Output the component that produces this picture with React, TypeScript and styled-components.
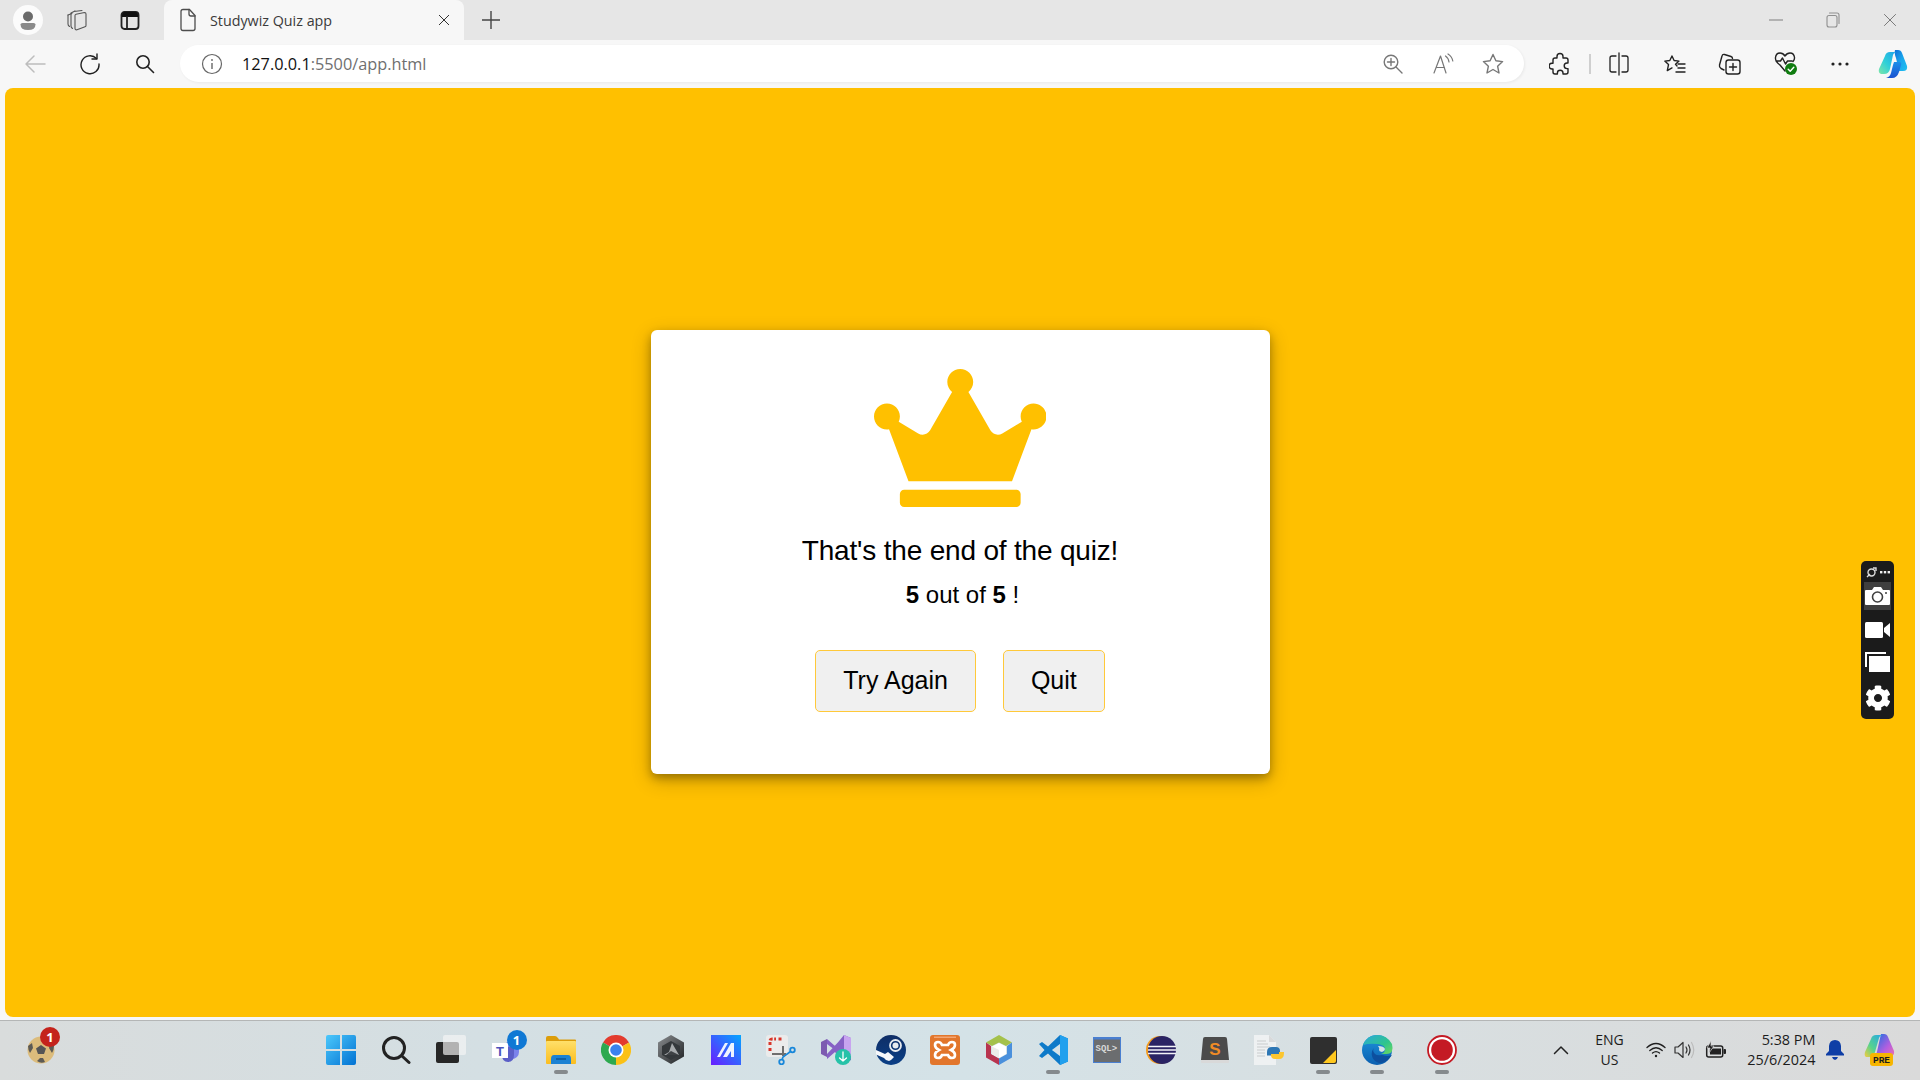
import React from "react";
import styled, { createGlobalStyle } from "styled-components";
import { FaCrown, FaCog } from "react-icons/fa";

const Global = createGlobalStyle`
  html, body { margin: 0; padding: 0; height: 100%; overflow: hidden; background: #f7f7f7; }
  #root { height: 100%; }
  * { box-sizing: border-box; }
`;

const Shell = styled.div`
  height: 1080px;
  width: 1920px;
  display: flex;
  flex-direction: column;
  font-family: "Open Sans", "Liberation Sans", sans-serif;
`;

const TabStrip = styled.div`
  height: 40px;
  flex: none;
  background: #e6e6e6;
  display: flex;
  align-items: center;
  padding: 0 2px 0 13px;
`;

const Slot = styled.div<{ $w?: number; $ml?: number }>`
  width: ${(p) => p.$w ?? 30}px;
  height: 30px;
  margin-left: ${(p) => p.$ml ?? 0}px;
  flex: none;
  display: flex;
  align-items: center;
  justify-content: center;
`;

const Tab = styled.div`
  width: 300px;
  height: 40px;
  margin-left: 19px;
  flex: none;
  background: #f7f7f7;
  border-radius: 8px 8px 0 0;
  display: flex;
  align-items: center;
  padding: 0 14px 0 15px;
`;

const TabTitle = styled.span`
  flex: 1;
  margin-left: 13px;
  font-size: 14.3px;
  color: #3b3b3b;
  white-space: nowrap;
`;

const Spacer = styled.div`
  flex: 1;
`;

const Toolbar = styled.div`
  height: 48px;
  flex: none;
  background: #f7f7f7;
  display: flex;
  align-items: center;
  padding: 0 12px 1px 20px;
`;

const AddressPill = styled.div`
  flex: 1;
  height: 37px;
  margin-left: 20px;
  background: #fff;
  border-radius: 19px;
  box-shadow: 1px 1px 3px rgba(0, 0, 0, 0.06);
  display: flex;
  align-items: center;
  padding: 0 19px 0 20px;
`;

const Url = styled.div`
  flex: 1;
  margin-left: 18px;
  font-size: 16.3px;
  color: #6f6f6f;
  white-space: nowrap;
`;

const UrlHost = styled.span`
  color: #111;
`;

const Divider = styled.div`
  width: 2px;
  height: 20px;
  margin-left: 14px;
  flex: none;
  background: #cfcfcf;
`;

const Viewport = styled.main`
  flex: 1;
  margin: 0 5px 3px;
  padding-bottom: 1px;
  background: #ffc000;
  border-radius: 8px;
  position: relative;
  display: flex;
  align-items: center;
  justify-content: center;
`;

const Card = styled.section`
  width: 619px;
  height: 444px;
  background: #fff;
  border-radius: 6px;
  box-shadow: 0 4px 8px rgba(0, 0, 0, 0.26), 0 6px 20px rgba(0, 0, 0, 0.24);
  display: flex;
  flex-direction: column;
  align-items: center;
  padding-top: 39px;
  font-family: "Liberation Sans", Arial, sans-serif;
  color: #000;
`;

const Crown = styled(FaCrown)`
  font-size: 138px;
  width: 172.5px;
  height: 138px;
  color: #ffc000;
  display: block;
`;

const Title = styled.div`
  margin-top: 29px;
  font-size: 28px;
  line-height: 30px;
  letter-spacing: -0.18px;
`;

const Score = styled.div`
  margin-top: 14px;
  padding-left: 5px;
  font-size: 24px;
  line-height: 30px;
`;

const Buttons = styled.div`
  margin-top: 40px;
  display: flex;
  gap: 27px;
`;

const Button = styled.button`
  height: 62px;
  padding: 0 27px 1px;
  font-family: inherit;
  font-size: 25px;
  color: #000;
  background: #f0f0f0;
  border: 1px solid #ffc93a;
  border-radius: 5px;
`;

const CaptureBar = styled.aside`
  position: absolute;
  right: 21px;
  top: 473px;
  width: 33px;
  height: 158px;
  background: #1b1b1b;
  border-radius: 5px;
  display: flex;
  flex-direction: column;
  align-items: center;
`;

const CaptureHead = styled.div`
  height: 21px;
  width: 100%;
  display: flex;
  align-items: center;
  justify-content: center;
  gap: 3px;
  padding-top: 2px;
`;

const CaptureBtn = styled.div<{ $active?: boolean }>`
  width: 27px;
  height: 28px;
  flex: none;
  margin-bottom: 6px;
  display: flex;
  align-items: center;
  justify-content: center;
  background: ${(p) => (p.$active ? "#3f3f3f" : "transparent")};
  color: #fff;
`;

const Taskbar = styled.footer`
  height: 60px;
  flex: none;
  border-top: 1px solid #b4b6b6;
  background: linear-gradient(90deg, #d9dcdc 0%, #d4dfe3 25%, #d4e2e7 50%, #d8dfe1 72%, #dadada 100%);
  display: flex;
  align-items: center;
  padding: 0 22px 1px;
`;

const AppSlot = styled.div<{ $w?: number; $ml?: number }>`
  position: relative;
  width: ${(p) => p.$w ?? 55}px;
  height: 58px;
  margin-left: ${(p) => p.$ml ?? 0}px;
  flex: none;
  display: flex;
  align-items: center;
  justify-content: center;
`;

const Running = styled.i`
  position: absolute;
  left: 50%;
  bottom: 5px;
  width: 14px;
  height: 4px;
  margin-left: -7px;
  border-radius: 2px;
  background: #858a8d;
`;

const Badge = styled.b<{ $bg: string; $top: number; $left: number }>`
  position: absolute;
  top: ${(p) => p.$top}px;
  left: ${(p) => p.$left}px;
  width: 20px;
  height: 20px;
  border-radius: 50%;
  background: ${(p) => p.$bg};
  color: #fff;
  font: bold 13px/20px "Open Sans", sans-serif;
  text-align: center;
`;

const TrayText = styled.div<{ $w: number; $ml: number; $align: string; $size?: number }>`
  width: ${(p) => p.$w}px;
  margin-left: ${(p) => p.$ml}px;
  flex: none;
  font-size: ${(p) => p.$size ?? 14}px;
  line-height: 20px;
  color: #1c1c1c;
  text-align: ${(p) => p.$align};
  white-space: nowrap;
`;

const stroke = { fill: "none", strokeLinecap: "round", strokeLinejoin: "round" } as const;

const Profile = () => (
  <svg width="30" height="30" viewBox="0 0 30 30">
    <circle cx="15" cy="15" r="15" fill="#fbfbfb" />
    <circle cx="15" cy="11.500" r="5" fill="#6a6a6a" />
    <path d="M7.500 19.500q0-1.500 2-1.500h11q2 0 2 1.500 0 5.500-7.500 5.500t-7.500-5.500z" fill="#8a8a8a" />
  </svg>
);
const Workspaces = () => (
  <svg width="24" height="24" viewBox="0 0 24 24" {...stroke} stroke="#555" strokeWidth="1.100">
    <path d="M3 7v9q0 1.500 1.500 2.500M6 5.500V18q0 1.500 1.500 2.500" />
    <path d="M3 7l4-1.500M6 5l4-2M9 3.500l8-1" />
    <path d="M10 7.500q0-1 1-1.300l8.500-1.700q1.500 0 1.500 1.500v11.500q0 1-1 1.300l-8 3q-2 .5-2-1.500z" />
  </svg>
);
const VerticalTabs = () => (
  <svg width="20" height="20" viewBox="0 0 20 20">
    <rect x="1.500" y="2" width="17" height="17" rx="3" fill="none" stroke="#222" strokeWidth="1.800" />
    <path d="M2 5q0-3 3-3h10q3 0 3 3v2H2z" fill="#111" />
    <path d="M7 6v12" stroke="#222" strokeWidth="1.800" />
  </svg>
);
const Doc = () => (
  <svg width="18" height="24" viewBox="0 0 18 24" {...stroke} stroke="#4d4d4d" strokeWidth="1.300">
    <path d="M2 3.500q0-2 2-2h6.500l5.500 6v13q0 2-2 2H4q-2 0-2-2z" />
    <path d="M10 1.500v4.500q0 2 2 2h4" />
  </svg>
);
const Close = ({ s = 12, c = "#333" }: { s?: number; c?: string }) => (
  <svg width={s} height={s} viewBox="0 0 12 12" stroke={c} strokeWidth={12 / s} fill="none">
    <path d="M1 1l10 10M11 1L1 11" />
  </svg>
);
const Plus = () => (
  <svg width="20" height="20" viewBox="0 0 20 20" stroke="#444" strokeWidth="1.400">
    <path d="M10 1v18M1 10h18" />
  </svg>
);
const Minimize = () => (
  <svg width="14" height="14" viewBox="0 0 14 14" stroke="#8f8f8f" strokeWidth="1.200">
    <path d="M0 7h14" />
  </svg>
);
const Restore = () => (
  <svg width="14" height="16" viewBox="0 0 14 16" {...stroke} stroke="#8f8f8f" strokeWidth="1.100">
    <rect x="1" y="3.500" width="10" height="11.500" rx="2" />
    <path d="M3.500 1h7.500q2 0 2 2v8.500" />
  </svg>
);
const Back = () => (
  <svg width="22" height="20" viewBox="0 0 22 20" {...stroke} stroke="#bdbdbd" strokeWidth="1.500">
    <path d="M21 10H2M10 2l-8 8 8 8" />
  </svg>
);
const Refresh = () => (
  <svg width="22" height="22" viewBox="0 0 22 22" {...stroke} stroke="#1f1f1f" strokeWidth="1.400">
    <path d="M17.500 5.500A9 9 0 1 0 20 11" />
    <path d="M18 1v5h-5" />
  </svg>
);
const Search = () => (
  <svg width="20" height="20" viewBox="0 0 20 20" {...stroke} stroke="#222" strokeWidth="1.600">
    <circle cx="8" cy="8" r="6.200" />
    <path d="M12.500 12.500l6 6" />
  </svg>
);
const Info = () => (
  <svg width="22" height="22" viewBox="0 0 22 22" stroke="#666" strokeWidth="1.200" fill="none">
    <circle cx="11" cy="11" r="9.500" />
    <path d="M11 10v6" strokeWidth="1.400" />
    <circle cx="11" cy="7" r=".9" fill="#666" stroke="none" />
  </svg>
);
const ZoomIn = () => (
  <svg width="20" height="20" viewBox="0 0 20 20" {...stroke} stroke="#777" strokeWidth="1.400">
    <circle cx="8" cy="8" r="6.800" />
    <path d="M13 13l6 6M8 4.500v7M4.500 8h7" />
  </svg>
);
const ReadAloud = () => (
  <svg width="22" height="22" viewBox="0 0 22 22" {...stroke} stroke="#777" strokeWidth="1.200">
    <path d="M1 20L7.500 3 13 20M3 14.500h8.500" />
    <path d="M12.500 3q3 2 3.500 6M15 1q4 2.500 4.800 7" />
  </svg>
);
const StarOutline = () => (
  <svg width="22" height="22" viewBox="0 0 22 22" {...stroke} stroke="#777" strokeWidth="1.400">
    <path d="M11 1.500l2.900 6.300 6.700.8-5 4.600 1.400 6.800-6-3.500-6 3.500 1.400-6.800-5-4.600 6.700-.8z" />
  </svg>
);
const PuzzleIcon = () => (
  <svg width="22" height="24" viewBox="0 0 22 24" {...stroke} stroke="#222" strokeWidth="1.400">
    <path d="M8 4.500q0-3 3-3t3 3V6h3q2 0 2 2v3h-1a2.800 2.800 0 0 0 0 5.600h1V20q0 2-2 2h-3v-1a2.800 2.800 0 0 0-5.600 0v1H6q-2 0-2-2v-3H3a2.900 2.900 0 0 1 0-5.800h1V8q0-2 2-2h2z" />
  </svg>
);
const SplitScreen = () => (
  <svg width="20" height="24" viewBox="0 0 20 24" {...stroke} stroke="#222" strokeWidth="1.300">
    <path d="M7 4H3q-2 0-2 2v12q0 2 2 2h4M13 4h4q2 0 2 2v12q0 2-2 2h-4" />
    <path d="M10 1v22" />
  </svg>
);
const Favorites = () => (
  <svg width="22" height="24" viewBox="0 0 22 24" {...stroke} stroke="#222" strokeWidth="1.400">
    <path d="M13 10l-1.500-1.700 3.500-3.200-4.900-.6L8 0 5.800 4.500.8 5.100l3.700 3.500-1.200 6 4.700-2.700" transform="translate(0 4)" />
    <path d="M14 12h7M14 16h7M12 20h9" />
  </svg>
);
const CollectionsIcon = () => (
  <svg width="24" height="24" viewBox="0 0 24 24" {...stroke} stroke="#222" strokeWidth="1.400">
    <path d="M6 18l-3-1.500Q1 15 1.500 13L4 4q.5-2 2.500-1.500l6.500 2q1.500.5 1.500 2" />
    <rect x="8" y="8" width="14" height="14" rx="2.500" />
    <path d="M15 11.500v7M11.500 15h7" />
  </svg>
);
const Health = () => (
  <svg width="24" height="26" viewBox="0 0 24 26">
    <path d="M6 14Q1 10 1.500 6.500 2 2 6 2q3 0 5 3 2-3 5-3 4 0 4.500 4.500.2 2-1.500 4M2 10h4.500l2-3 3 6 2-3H18M6 14l5 6" {...stroke} stroke="#222" strokeWidth="1.400" />
    <circle cx="17" cy="18" r="6" fill="#107c10" />
    <path d="M14.200 18.200l2 2 3.600-4" {...stroke} stroke="#fff" strokeWidth="1.400" />
  </svg>
);
const More = () => (
  <svg width="18" height="4" viewBox="0 0 18 4" fill="#222">
    <circle cx="2" cy="2" r="1.600" />
    <circle cx="9" cy="2" r="1.600" />
    <circle cx="16" cy="2" r="1.600" />
  </svg>
);
const Copilot = () => (
  <svg width="30" height="30" viewBox="0 0 30 30">
    <defs>
      <linearGradient id="cpa" x1="0" y1="0" x2="1" y2="1">
        <stop offset="0" stopColor="#0f6fd8" />
        <stop offset=".5" stopColor="#19a6ec" />
        <stop offset="1" stopColor="#1fc0f0" />
      </linearGradient>
      <linearGradient id="cpb" x1="0" y1="1" x2="1" y2="0">
        <stop offset="0" stopColor="#7fe6a8" />
        <stop offset=".45" stopColor="#2fd0d8" />
        <stop offset="1" stopColor="#1ba0ea" />
      </linearGradient>
      <linearGradient id="cpc" x1="0" y1="0" x2="0" y2="1">
        <stop offset="0" stopColor="#1c8fea" />
        <stop offset="1" stopColor="#1a52d0" />
      </linearGradient>
    </defs>
    <path d="M17 1h3q3 0 4 3l5 13q1 5-4 5h-4l-3-13q-2-5-1-8z" fill="url(#cpa)" />
    <path d="M7 7q1-4 5-4h7q-3 0-4 3l-3 14q-1 5-6 5H3q-3-1-2-5z" fill="url(#cpb)" />
    <path d="M16 13h5q3 0 2 3l-2 7q-2 6-7 6H8q4-1 5-5l2-8z" fill="url(#cpc)" />
  </svg>
);
const Camera = () => (
  <svg width="25" height="20" viewBox="0 0 25 20">
    <path d="M1 4h6l2-3h7l2 3h6q1 0 1 1v13q0 1-1 1H1q-1 0-1-1V5q0-1 1-1z" fill="#fff" />
    <circle cx="12.500" cy="11" r="5" fill="none" stroke="#3f3f3f" strokeWidth="1.600" />
    <circle cx="21" cy="7" r="1" fill="#3f3f3f" />
  </svg>
);
const Video = () => (
  <svg width="25" height="16" viewBox="0 0 25 16" fill="#fff">
    <rect x="0" y="0" width="18" height="16" rx="1.500" />
    <path d="M19 6l6-5v14l-6-5z" />
  </svg>
);
const Layers = () => (
  <svg width="25" height="24" viewBox="0 0 25 24">
    <path d="M0 0h21v2H2v13H0z" fill="#fff" />
    <rect x="4" y="4" width="21" height="16" fill="#fff" />
  </svg>
);
const CaptureLogo = () => (
  <svg width="11" height="11" viewBox="0 0 11 11" fill="none" stroke="#ddd" strokeWidth="1.400">
    <circle cx="5.500" cy="5.500" r="3.500" />
    <path d="M1 10l3-3M7 1l3 0 0 3" />
  </svg>
);

const Soccer = () => (
  <svg width="28" height="28" viewBox="0 0 28 28">
    <circle cx="14" cy="14" r="13.500" fill="#dcbc7c" />
    <path d="M14 9l5 3.500-2 5.500h-6l-2-5.500z" fill="#555" />
    <path d="M1 10l4-3 1 5-3 5q-2-3-2-7zM27 10l-4-3-1 5 3 5q2-3 2-7zM10 25l3-3h3l2 4q-4 2-8-1z" fill="#5c5a55" />
  </svg>
);
const Windows = () => (
  <svg width="30" height="30" viewBox="0 0 30 30">
    <defs>
      <linearGradient id="win" x1="0" y1="0" x2="1" y2="1">
        <stop offset="0" stopColor="#4cc8fb" />
        <stop offset="1" stopColor="#0272d3" />
      </linearGradient>
    </defs>
    <path d="M2 0h12v14H0V2q0-2 2-2zM16 0h12q2 0 2 2v12H16zM0 16h14v14H2q-2 0-2-2zM16 16h14v12q0 2-2 2H16z" fill="url(#win)" />
  </svg>
);
const TaskSearch = () => (
  <svg width="30" height="30" viewBox="0 0 30 30" {...stroke} stroke="#222" strokeWidth="3">
    <circle cx="13" cy="13" r="10.500" />
    <path d="M21 21l7 6.500" />
  </svg>
);
const TaskView = () => (
  <svg width="32" height="30" viewBox="0 0 32 30">
    <rect x="1" y="7" width="23" height="21" rx="2" fill="#272727" />
    <rect x="8" y="0" width="23" height="20" rx="2" fill="#f4f4f4" fillOpacity=".68" />
  </svg>
);
const Teams = () => (
  <svg width="28" height="30" viewBox="0 0 28 30">
    <circle cx="24" cy="9" r="4" fill="#5b5fc7" />
    <rect x="12" y="6" width="15" height="18" rx="7" fill="#7b83eb" />
    <path d="M10 12h12v8q0 7-6 7t-6-7z" fill="#5b5fc7" />
    <rect x="0" y="8" width="16" height="15" fill="#fff" />
    <text x="8" y="20.500" textAnchor="middle" fontFamily="Liberation Sans" fontWeight="700" fontSize="13" fill="#4b53bc">T</text>
  </svg>
);
const Folder = () => (
  <svg width="30" height="28" viewBox="0 0 30 28">
    <defs>
      <linearGradient id="fold" x1="0" y1="0" x2="0" y2="1">
        <stop offset="0" stopColor="#ffe06a" />
        <stop offset="1" stopColor="#fbbd1f" />
      </linearGradient>
    </defs>
    <path d="M0 2q0-2 2-2h7q1.500 0 3 2l1 1.500h16q1 0 1 1V8H0z" fill="#dc9d0a" />
    <rect y="5" width="30" height="23" rx="1" fill="url(#fold)" />
    <path d="M5 23q0-4 3-4h14q3 0 3 4v5H5z" fill="#1c82d3" />
    <path d="M10 23h10" stroke="#0b4f8c" strokeWidth="1.300" />
  </svg>
);
const Chrome = () => (
  <svg width="30" height="30" viewBox="0 0 30 30">
    <path d="M15 15L2 7.500A15 15 0 0 1 28 7.500z" fill="#e33b2e" />
    <path d="M15 15L28 7.500A15 15 0 0 1 15 30z" fill="#fbc116" />
    <path d="M15 15L15 30A15 15 0 0 1 2 7.500z" fill="#2da94f" />
    <circle cx="15" cy="15" r="7.500" fill="#fff" />
    <circle cx="15" cy="15" r="5.800" fill="#3b82ee" />
  </svg>
);
const HexDark = () => (
  <svg width="28" height="30" viewBox="0 0 28 30">
    <defs>
      <linearGradient id="hex" x1="0" y1="0" x2="1" y2="1">
        <stop offset="0" stopColor="#8a8d90" />
        <stop offset="1" stopColor="#1f2224" />
      </linearGradient>
    </defs>
    <path d="M14 0l13 7.500v14L14 29 1 21.500v-14z" fill="url(#hex)" />
    <path d="M14 6l9 5v9l-9 5-9-5v-9z" fill="#34383b" />
    <path d="M15 8l7 12H7l5-3z" fill="#a7aaac" />
    <path d="M9 20l5-4 8 4z" fill="#3e4144" />
  </svg>
);
const Astah = () => (
  <svg width="30" height="30" viewBox="0 0 30 30">
    <defs>
      <linearGradient id="ast" x1="0" y1="1" x2="1" y2="0">
        <stop offset="0" stopColor="#6a1cff" />
        <stop offset="1" stopColor="#04a6ff" />
      </linearGradient>
    </defs>
    <rect width="30" height="30" fill="url(#ast)" />
    <path d="M6 22L14 8h3L9 22zM12 22l8-14h3v14h-3v-6l-4 6z" fill="#fff" fillOpacity=".92" />
  </svg>
);
const Snip = () => (
  <svg width="30" height="30" viewBox="0 0 30 30">
    <rect width="22" height="22" rx="3" fill="#ebebeb" />
    <path d="M4 10V6q0-2 2-2h4M12.500 4h4M4 13v4" fill="none" stroke="#d8352a" strokeWidth="3" strokeDasharray="3 1.500" />
    <path d="M17 11v10M6 19h14" stroke="#6f6f6f" strokeWidth="2" />
    <circle cx="26.500" cy="15" r="2.300" fill="none" stroke="#1887da" strokeWidth="1.800" />
    <circle cx="15.500" cy="27" r="2.300" fill="none" stroke="#1887da" strokeWidth="1.800" />
    <path d="M24.500 16.500L17 22l-1 3" fill="none" stroke="#1887da" strokeWidth="1.600" />
  </svg>
);
const VisualStudio = () => (
  <svg width="30" height="30" viewBox="0 0 30 30">
    <path d="M0 7l6-3v18l-6-3z" fill="#7c5bb0" />
    <path d="M6 4l8 7 9-11 7 3v22l-7 3-9-11-8 7v-5l16-17v19L6 9z" fill="#8661c5" />
    <path d="M23 0l7 3v18H23z" fill="#c8a4ef" />
    <circle cx="22" cy="22" r="8" fill="#26c2a8" />
    <path d="M22 17v9M18.500 23l3.500 3 3.500-3" {...stroke} stroke="#fff" strokeWidth="1.300" />
  </svg>
);
const Steam = () => (
  <svg width="30" height="30" viewBox="0 0 30 30">
    <defs>
      <linearGradient id="stm" x1="0" y1="0" x2="0" y2="1">
        <stop offset="0" stopColor="#0f2e66" />
        <stop offset="1" stopColor="#0a3f86" />
      </linearGradient>
    </defs>
    <circle cx="15" cy="15" r="15" fill="url(#stm)" />
    <path d="M0 15l9 4 3-2 6 5-3 3-2 1q-3 0-5-3l-8-3.500z" fill="#fff" opacity=".96" />
    <circle cx="19.500" cy="10.500" r="5.500" fill="none" stroke="#e8ebef" strokeWidth="1.800" />
    <circle cx="19.500" cy="10.500" r="3" fill="#e8ebef" />
  </svg>
);
const Xampp = () => (
  <svg width="30" height="30" viewBox="0 0 30 30">
    <rect width="30" height="30" rx="3" fill="#e2762c" />
    <path d="M8 7q-3 0-3 3 0 3 4 5-4 2-4 5 0 3 3 3 3 0 4-3h6q1 3 4 3 3 0 3-3 0-3-4-5 4-2 4-5 0-3-3-3-3 0-4 3h-6q-1-3-4-3z" fill="none" stroke="#fff" strokeWidth="2.600" />
    <rect x="4" y="1.500" width="22" height="1.500" fill="#f3a673" />
  </svg>
);
const NetBeans = () => (
  <svg width="28" height="30" viewBox="0 0 28 30">
    <path d="M14 0l13 7.500-6 3.500-7-3.500L7 11 1 7.500z" fill="#a4c14b" />
    <path d="M1 7.500v15L14 30v-6.500l-8-4.500V11z" fill="#b8344f" />
    <path d="M27 7.500v15L14 30v-6.500l8-4.500V11z" fill="#4a90dc" />
    <path d="M14 8l7 3.500v7.500l-7 4-7-4v-7.500z" fill="#fff" />
    <path d="M14 15v8l-7-4v-7.500z" fill="#ecebe8" />
  </svg>
);
const VSCode = () => (
  <svg width="30" height="30" viewBox="0 0 30 30">
    <path d="M22 0l8 3.500v23L22 30 10 18.500 4 23l-3-2 5.500-6L1 9l3-2 6 4.500z" fill="#0d7ac9" />
    <path d="M22 0l8 3.500v23L22 30V21l-8-6 8-6z" fill="#21a0ee" />
    <path d="M22 9l-8 6 8 6z" fill="#d4e2e7" />
  </svg>
);
const SqlConsole = () => (
  <svg width="28" height="26" viewBox="0 0 28 26">
    <rect width="28" height="26" fill="#4a7fd0" />
    <rect x="1" y="2.500" width="26" height="22.500" fill="#6b6d6f" />
    <text x="2.500" y="14" fontFamily="Liberation Mono" fontSize="9" fontWeight="700" fill="#d8d8d8">SQL&gt;</text>
  </svg>
);
const Eclipse = () => (
  <svg width="30" height="30" viewBox="0 0 30 30">
    <circle cx="14" cy="15" r="14" fill="#f39a1c" />
    <circle cx="16" cy="15" r="14" fill="#2a2364" />
    <path d="M2 11.500h28M2 15h28M2 18.500h28" stroke="#f3f3f8" strokeWidth="1.400" />
  </svg>
);
const Sublime = () => (
  <svg width="28" height="26" viewBox="0 0 28 26">
    <path d="M2 2q0-2 2-2h20q2 0 2 2l2 21H0z" fill="#4b4b4b" />
    <rect y="23" width="28" height="3" rx="1" fill="#d9d9d9" />
    <text x="14" y="18" textAnchor="middle" fontFamily="Liberation Sans" fontWeight="700" fontSize="17" fill="#f08b25">S</text>
  </svg>
);
const PyFile = () => (
  <svg width="30" height="30" viewBox="0 0 30 30">
    <path d="M0 0h15l7 7v23H0z" fill="#eef1f2" />
    <path d="M3 6h9M3 9h11M3 12h13M3 15h8M3 18h8M3 21h8" stroke="#c9cccd" strokeWidth="1" />
    <path d="M15 0l7 7h-7z" fill="#d8dadb" />
    <path d="M13 17q0-5 5-5h4q4 0 4 4v3h-8v1.500h-5z" fill="#2e77b4" />
    <path d="M30 18q0 6-5 6h-4q-4 0-4-4v-1h8v-2h5z" fill="#fcc62f" />
  </svg>
);
const Sticky = () => (
  <svg width="27" height="27" viewBox="0 0 27 27">
    <rect width="27" height="27" rx="2" fill="#2f2f2f" />
    <path d="M13 26L26 13v11q0 2-2 2z" fill="#ffc81f" />
  </svg>
);
const Edge = () => (
  <svg width="31" height="30" viewBox="0 0 31 30">
    <defs>
      <linearGradient id="eg1" x1="0" y1="0" x2="1" y2="1">
        <stop offset="0" stopColor="#2aa8dc" />
        <stop offset=".6" stopColor="#2fc58c" />
        <stop offset="1" stopColor="#6fd85e" />
      </linearGradient>
      <linearGradient id="eg2" x1="0" y1="0" x2="0" y2="1">
        <stop offset="0" stopColor="#1f95dd" />
        <stop offset="1" stopColor="#0b5fb0" />
      </linearGradient>
    </defs>
    <circle cx="15" cy="15" r="15" fill="url(#eg2)" />
    <path d="M1 10Q5 0 15 0q10 0 15 9 1 4 0 7-1 3-6 3h-5q4-1 4-5 0-4-7-5Q7 8 1 10z" fill="url(#eg1)" />
    <path d="M16 11q6 0 7 3 0 2-3 3-3-.5-3-2 1-2-1-4z" fill="#d4e2e7" />
    <path d="M20 20q-5 1-7-1-3-3-1-6-3 3-2 8 1 5 7 7 7 1 13-8-4 2-10 0z" fill="#0d4f9e" />
  </svg>
);
const Record = () => (
  <svg width="30" height="30" viewBox="0 0 30 30">
    <circle cx="15" cy="15" r="14" fill="#fff" stroke="#c41a24" strokeWidth="1.800" />
    <circle cx="15" cy="15" r="10.800" fill="#c41a24" />
  </svg>
);
const Chevron = () => (
  <svg width="16" height="10" viewBox="0 0 16 10" {...stroke} stroke="#222" strokeWidth="1.500">
    <path d="M1.500 8.500L8 2l6.500 6.500" />
  </svg>
);
const Wifi = () => (
  <svg width="20" height="16" viewBox="0 0 20 16" {...stroke} stroke="#1f1f1f" strokeWidth="1.300">
    <path d="M1 5.500q9-8 18 0M3.800 8.500q6.200-5.500 12.400 0M6.500 11q3.500-2.800 7 0" />
    <circle cx="10" cy="14" r="1.200" fill="#1f1f1f" stroke="none" />
  </svg>
);
const Speaker = () => (
  <svg width="22" height="18" viewBox="0 0 22 18" {...stroke} stroke="#333" strokeWidth="1.200">
    <path d="M1 6h3l5-4.500v15L4 12H1z" />
    <path d="M12 6q2 3 0 6M14.500 4q3 5 0 10" />
    <path d="M17.500 1.500q4.500 7.500 0 15" stroke="#bcbcbc" />
  </svg>
);
const Battery = () => (
  <svg width="22" height="18" viewBox="0 0 22 18">
    <rect x="1.700" y="5" width="16" height="11" rx="2" fill="none" stroke="#222" strokeWidth="1.500" />
    <rect x="5" y="7.500" width="11" height="6" fill="#222" />
    <rect x="18.500" y="8" width="2.500" height="5" rx="1" fill="#222" />
    <path d="M6 0L2 7h3l-1 5 5-7H6z" fill="#222" stroke="#d9d9d9" strokeWidth=".7" />
  </svg>
);
const Bell = () => (
  <svg width="18" height="20" viewBox="0 0 18 20" fill="#0f3ea6">
    <path d="M9 0q5.500 0 6 6v5l3 3v1.500H0V14l3-3V6q.5-6 6-6z" />
    <path d="M6 17h6q-1 3-3 3t-3-3z" />
  </svg>
);
const CopilotPre = () => (
  <svg width="32" height="34" viewBox="0 0 32 34">
    <defs>
      <linearGradient id="cpp" x1="0" y1="1" x2="1" y2="0">
        <stop offset="0" stopColor="#f5cd3d" />
        <stop offset=".4" stopColor="#58d38c" />
        <stop offset="1" stopColor="#22a6ea" />
      </linearGradient>
      <linearGradient id="cpq" x1="0" y1="0" x2="1" y2="1">
        <stop offset="0" stopColor="#1b6fe0" />
        <stop offset=".6" stopColor="#b25fe0" />
        <stop offset="1" stopColor="#ee6fb0" />
      </linearGradient>
    </defs>
    <path d="M17 1h3q3 0 4 3l6 14q1 5-4 5H12z" fill="url(#cpq)" />
    <path d="M7 6q1-4 5-4h7q-3 0-4 3l-4 14q-1 5-6 5H2q-2-1-1-5z" fill="url(#cpp)" />
    <rect x="6" y="20" width="23" height="13" rx="3" fill="#f7b500" />
    <text x="17.500" y="30" textAnchor="middle" fontFamily="Liberation Mono" fontWeight="700" fontSize="9.500" fill="#1d1d1d">PRE</text>
  </svg>
);
const CaptureDots = () => (
  <svg width="10" height="3" viewBox="0 0 10 3" fill="#eee">
    <rect width="2.400" height="2.400" />
    <rect x="3.800" width="2.400" height="2.400" />
    <rect x="7.600" width="2.400" height="2.400" />
  </svg>
);

const firstApps: [React.ReactNode, boolean][] = [
  [<Windows key="w" />, false],
  [<TaskSearch key="s" />, false],
  [<TaskView key="t" />, false],
  [<Teams key="te" />, false],
  [<Folder key="f" />, true],
  [<Chrome key="c" />, false],
  [<HexDark key="h" />, false],
  [<Astah key="a" />, false],
  [<Snip key="sn" />, false],
  [<VisualStudio key="v" />, false],
];

const secondApps: [React.ReactNode, boolean][] = [
  [<Steam key="st" />, false],
  [<Xampp key="x" />, false],
  [<NetBeans key="n" />, false],
  [<VSCode key="vc" />, true],
  [<SqlConsole key="q" />, false],
  [<Eclipse key="e" />, false],
  [<Sublime key="su" />, false],
  [<PyFile key="p" />, false],
  [<Sticky key="sk" />, true],
  [<Edge key="ed" />, true],
];

export default function App() {
  return (
    <Shell>
      <Global />
      <TabStrip>
        <Slot><Profile /></Slot>
        <Slot $ml={19}><Workspaces /></Slot>
        <Slot $ml={23}><VerticalTabs /></Slot>
        <Tab>
          <Doc />
          <TabTitle>Studywiz Quiz app</TabTitle>
          <Close s={12} />
        </Tab>
        <Slot $ml={12}><Plus /></Slot>
        <Spacer />
        <Slot $w={57}><Minimize /></Slot>
        <Slot $w={57}><Restore /></Slot>
        <Slot $w={57}><Close s={14} c="#7a7a7a" /></Slot>
      </TabStrip>
      <Toolbar>
        <Slot><Back /></Slot>
        <Slot $ml={25}><Refresh /></Slot>
        <Slot $ml={25}><Search /></Slot>
        <AddressPill>
          <Slot $w={24}><Info /></Slot>
          <Url><UrlHost>127.0.0.1</UrlHost>:5500/app.html</Url>
          <Slot $w={24}><ZoomIn /></Slot>
          <Slot $w={24} $ml={27}><ReadAloud /></Slot>
          <Slot $w={24} $ml={25}><StarOutline /></Slot>
        </AddressPill>
        <Slot $ml={21}><PuzzleIcon /></Slot>
        <Divider />
        <Slot $ml={13}><SplitScreen /></Slot>
        <Slot $ml={26}><Favorites /></Slot>
        <Slot $ml={25}><CollectionsIcon /></Slot>
        <Slot $ml={26}><Health /></Slot>
        <Slot $ml={24}><More /></Slot>
        <Slot $ml={23}><Copilot /></Slot>
      </Toolbar>
      <Viewport>
        <Card>
          <Crown />
          <Title>That's the end of the quiz!</Title>
          <Score><b>5</b> out of <b>5</b> !</Score>
          <Buttons>
            <Button>Try Again</Button>
            <Button>Quit</Button>
          </Buttons>
        </Card>
        <CaptureBar>
          <CaptureHead><CaptureLogo /><CaptureDots /></CaptureHead>
          <CaptureBtn $active><Camera /></CaptureBtn>
          <CaptureBtn><Video /></CaptureBtn>
          <CaptureBtn><Layers /></CaptureBtn>
          <CaptureBtn><FaCog size={26} /></CaptureBtn>
        </CaptureBar>
      </Viewport>
      <Taskbar>
        <AppSlot $w={38}>
          <Soccer />
          <Badge $bg="#c4231c" $top={6} $left={18}>1</Badge>
        </AppSlot>
        <AppSlot $w={0} $ml={253.5} />
        {firstApps.map(([icon, running], i) => (
          <AppSlot key={i}>
            {icon}
            {running && <Running />}
            {i === 3 && <Badge $bg="#0f78d4" $top={9} $left={28}>1</Badge>}
          </AppSlot>
        ))}
        {secondApps.map(([icon, running], i) => (
          <AppSlot key={i} $w={54.1}>
            {icon}
            {running && <Running />}
          </AppSlot>
        ))}
        <AppSlot $ml={10}>
          <Record />
          <Running />
        </AppSlot>
        <Slot $ml={77}><Chevron /></Slot>
        <TrayText $w={46} $ml={10} $align="center">ENG<br />US</TrayText>
        <Slot $w={24} $ml={12}><Wifi /></Slot>
        <Slot $w={24} $ml={5}><Speaker /></Slot>
        <Slot $w={24} $ml={7}><Battery /></Slot>
        <TrayText $w={80} $ml={7} $align="right" $size={14.4}>5:38 PM<br />25/6/2024</TrayText>
        <Slot $w={26} $ml={7}><Bell /></Slot>
        <Slot $w={36} $ml={14}><CopilotPre /></Slot>
      </Taskbar>
    </Shell>
  );
}
